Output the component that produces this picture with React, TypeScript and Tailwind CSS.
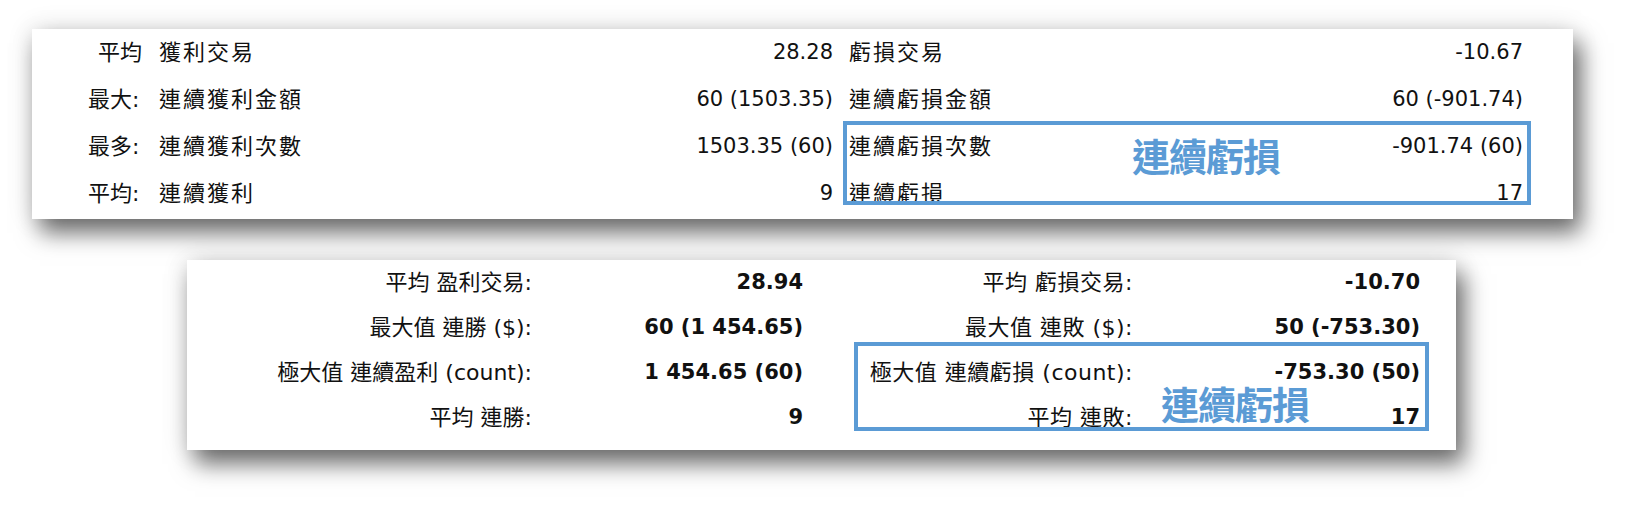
import React from "react";

const font = "font-['DejaVu_Sans','Noto_Sans_CJK_TC',sans-serif]";

const topRows = [
    { lead: "平均", name: "獲利交易", value: "28.28", lossName: "虧損交易", lossValue: "-10.67", indent: true },
    { lead: "最大:", name: "連續獲利金額", value: "60 (1503.35)", lossName: "連續虧損金額", lossValue: "60 (-901.74)" },
    { lead: "最多:", name: "連續獲利次數", value: "1503.35 (60)", lossName: "連續虧損次數", lossValue: "-901.74 (60)" },
    { lead: "平均:", name: "連續獲利", value: "9", lossName: "連續虧損", lossValue: "17" },
];

const bottomRows = [
    { label: "平均 盈利交易:", value: "28.94", lossLabel: "平均 虧損交易:", lossValue: "-10.70" },
    { label: "最大值 連勝 ($):", value: "60 (1 454.65)", lossLabel: "最大值 連敗 ($):", lossValue: "50 (-753.30)" },
    { label: "極大值 連續盈利 (count):", value: "1 454.65 (60)", lossLabel: "極大值 連續虧損 (count):", lossValue: "-753.30 (50)" },
    { label: "平均 連勝:", value: "9", lossLabel: "平均 連敗:", lossValue: "17" },
];

const Callout: React.FC<{ className: string }> = ({ className }) => (
    <div
        className={`absolute font-['Noto_Sans_CJK_TC',sans-serif] font-bold text-[38px] leading-none tracking-[-1px] text-[#5b9bd5] ${className}`}
    >
        連續虧損
    </div>
);

const TopPanel: React.FC = () => {
    return (
        <div className="relative ml-[32px] mt-[32px] w-[1541px] h-[190px] bg-white shadow-[0_0_24px_rgba(0,0,0,0.14),8px_14px_22px_rgba(0,0,0,0.55)]">
            <div className="-mt-[3px] pl-[56px] pr-[50px] text-[#111]">
                {topRows.map((r) => (
                    <div key={r.name} className="grid grid-cols-[745px_674px] gap-x-[16px] h-[47px] items-center">
                        <div className="flex items-center">
                            <span className={`w-[71px] text-[22px] ${font} ${r.indent ? "pl-[10px]" : ""}`}>
                                {r.lead}
                            </span>
                            <span className={`flex-1 text-[22px] tracking-[2px] ${font}`}>{r.name}</span>
                            <span className={`text-[21px] ${font}`}>{r.value}</span>
                        </div>
                        <div className="flex items-center justify-between">
                            <span className={`text-[22px] tracking-[2px] ${font}`}>{r.lossName}</span>
                            <span className={`text-[21px] ${font}`}>{r.lossValue}</span>
                        </div>
                    </div>
                ))}
            </div>
            <div className="absolute left-[811px] top-[92px] w-[688px] h-[84px] border-[4px] border-[#5b9bd5]"></div>
            <Callout className="left-[1100px] top-[107px]" />
        </div>
    );
};

const BottomPanel: React.FC = () => {
    return (
        <div className="relative ml-[187px] mt-[49px] w-[1269px] h-[190px] bg-white shadow-[0_0_24px_rgba(0,0,0,0.14),8px_14px_22px_rgba(0,0,0,0.55)]">
            <div className="-mt-[8px] text-[#111]">
                {bottomRows.map((r) => (
                    <div key={r.label} className="grid grid-cols-[345px_271px_330px_287px] h-[45px] items-center">
                        <span className={`text-right text-[22px] ${font}`}>{r.label}</span>
                        <span className={`text-right text-[21px] font-bold ${font}`}>{r.value}</span>
                        <span className={`text-right text-[22px] tracking-[0.5px] ${font}`}>{r.lossLabel}</span>
                        <span className={`text-right text-[21px] font-bold ${font}`}>{r.lossValue}</span>
                    </div>
                ))}
            </div>
            <div className="absolute left-[667px] top-[82px] w-[575px] h-[89px] border-[4px] border-[#5b9bd5]"></div>
            <Callout className="left-[974px] top-[124px]" />
        </div>
    );
};

const App: React.FC = () => {
    return (
        <div className="w-[1638px] h-[526px] bg-white overflow-hidden">
            <TopPanel />
            <BottomPanel />
        </div>
    );
};

export default App;
